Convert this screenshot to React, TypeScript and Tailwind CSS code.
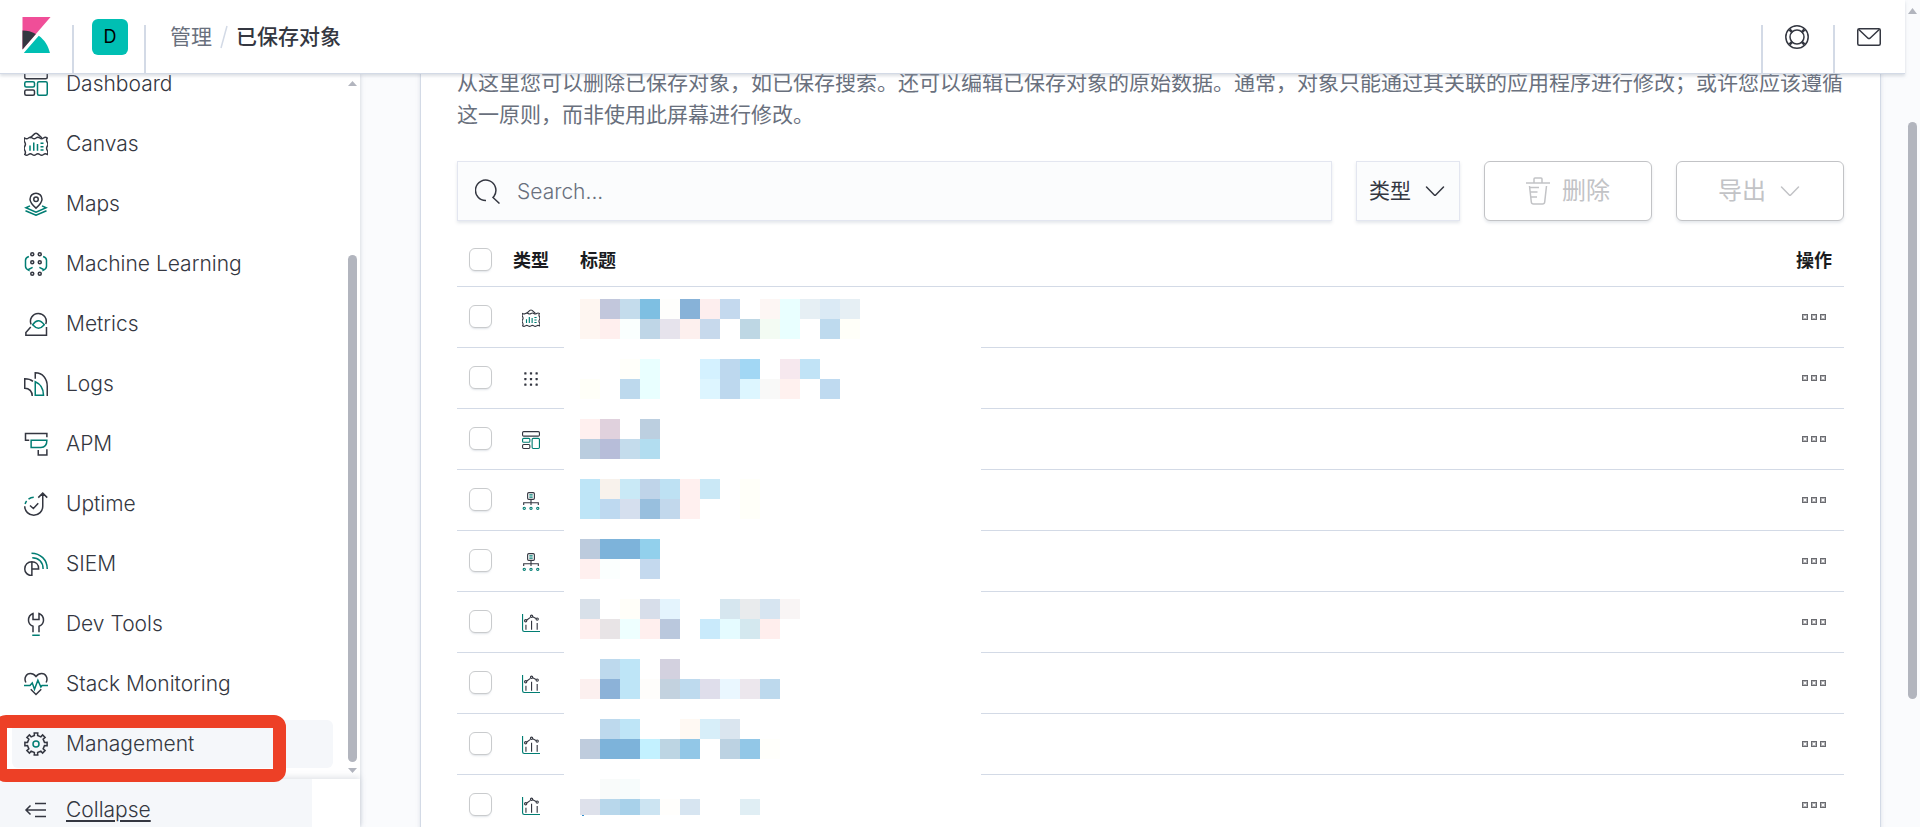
import React from 'react';

type IconProps = { className?: string };

const DARK = '#343741';
const TEAL = '#017d73';

function AppIcon({ className = 'size-6', children }: IconProps & { children: React.ReactNode }) {
  return (
    <svg viewBox="0 0 32 32" className={`shrink-0 ${className}`} fill="none" stroke={DARK} strokeWidth="2" aria-hidden="true">
      {children}
    </svg>
  );
}

function DashboardIcon({ className }: IconProps) {
  return (
    <AppIcon className={className}>
      <rect x="1" y="1" width="30" height="8" rx="2" />
      <rect x="1" y="13" width="13" height="7" rx="2" stroke={TEAL} />
      <rect x="18" y="13" width="13" height="18" rx="2" stroke={TEAL} />
      <rect x="1" y="24" width="13" height="7" rx="2" />
    </AppIcon>
  );
}

function CanvasIcon({ className }: IconProps) {
  return (
    <AppIcon className={className}>
      <path d="M8 8l6-5.500q2-1.500 4 0L24 8" />
      <path d="M1 8q2.500 1.800 5 0t5 0 5 0 5 0 5 0 5 0q-1.800 2.750 0 5.500t0 5.500 0 5.500 0 5.500q-2.500-1.800-5 0t-5 0-5 0-5 0-5 0-5 0q1.800-2.750 0-5.500t0-5.500 0-5.500 0-5.500z" />
      <path d="M8 18v7M13 14v11M18 16v9M22 15h4M22 19.500h4M22 24h4" stroke={TEAL} />
    </AppIcon>
  );
}

function MapsIcon({ className }: IconProps) {
  return (
    <AppIcon className={className}>
      <path d="M16 21.500C10 16 8 13 8 9.500a8 8 0 0 1 16 0c0 3.500-2 6.500-8 12z" />
      <circle cx="16" cy="9.500" r="3" />
      <path d="M8 18.500l-5.500 2.500L16 27l13.500-6L24 18.500M2 25l14 6 14-6" stroke={TEAL} />
    </AppIcon>
  );
}

function MachineLearningIcon({ className }: IconProps) {
  return (
    <AppIcon className={className}>
      {[3, 13.5, 29].map((cy) => (
        <g key={cy}>
          <circle cx="11" cy={cy} r="2" />
          <circle cx="21" cy={cy} r="2" />
        </g>
      ))}
      <path d="M6.500 6Q2 7.500 2 11v8q0 3.500 4.500 5.500v-1.500l5-2.500M25.500 6Q30 7.500 30 11v8q0 3.500-4.500 5.500v-1.500l-5-2.500" stroke={TEAL} />
    </AppIcon>
  );
}

function MetricsIcon({ className }: IconProps) {
  return (
    <AppIcon className={className}>
      <path d="M9.500 16.500A10.500 10.500 0 1 1 29 16M9 20l-6.500 7.500V31H30V20" />
      <path d="M11.500 17q7.500-10.500 15.500 0-7.500 9-15.500 0z" stroke={TEAL} />
    </AppIcon>
  );
}

function LogsIcon({ className }: IconProps) {
  return (
    <AppIcon className={className}>
      <path d="M15 9V1c10 0 16 8 16 18v13M12 12.500C9 10 6 9 1 9v12.500c6 0 10 4.500 10 10.500" />
      <path d="M15 31V13c7 3 11 9 11 18z" stroke={TEAL} />
    </AppIcon>
  );
}

function ApmIcon({ className }: IconProps) {
  return (
    <AppIcon className={className}>
      <path d="M7 11H2V2h28.500v5M19 24v6.500h11.500V23" />
      <path d="M9.500 11h21c0 6-3 9.500-8 9.500h-13z" stroke={TEAL} />
    </AppIcon>
  );
}

function UptimeIcon({ className }: IconProps) {
  return (
    <AppIcon className={className}>
      <path d="M1 19a12 12 0 0 0 24 0V2M19 7.500L25 1.500l6 6M8 18l4.500 4 6.500-7" />
      <path d="M1.500 16A12 12 0 0 1 3.500 12M6 9.500A12 12 0 0 1 13 7" stroke={TEAL} />
    </AppIcon>
  );
}

function SiemIcon({ className }: IconProps) {
  return (
    <AppIcon className={className}>
      <path d="M10.500 13v18.500C5 31.500 1 27.500 1 22.500 1 17 5 13 10.500 13c5 0 9 3.500 9 9.500h-9" />
      <path d="M10 1.500c12 0 21 9 21 21M11 7.500c8.500 0 14.500 6 14.500 15" stroke={TEAL} />
    </AppIcon>
  );
}

function DevToolsIcon({ className }: IconProps) {
  return (
    <AppIcon className={className}>
      <path d="M12 27v-8C8 17.500 6 14.500 6 11c0-4.500 2-7.500 6-9v8h8V2c4 1.500 6 4.500 6 9 0 3.500-2 6.500-6 8v8" />
      <path d="M11 31h10" stroke={TEAL} />
    </AppIcon>
  );
}

function MonitoringIcon({ className }: IconProps) {
  return (
    <AppIcon className={className}>
      <path d="M2.500 14C-.5 8 3 2 8.500 2c3 0 5.500 1.500 7.500 4 2-2.500 4.500-4 7.500-4C29 2 32.500 8 29.500 14M9 23l7 7 7-7" />
      <path d="M0 18h8l3-3.500L14 23l4.500-12 4 9 1.500-2h8" stroke={TEAL} />
    </AppIcon>
  );
}

function gearPath(teeth: number, outer: number, inner: number) {
  const points: string[] = [];
  const step = (Math.PI * 2) / teeth;
  for (let i = 0; i < teeth; i++) {
    const mid = i * step - Math.PI / 2;
    const corners: [number, number][] = [
      [-0.24, inner],
      [-0.2, outer],
      [0.2, outer],
      [0.24, inner],
    ];
    corners.forEach(([part, radius]) => {
      const angle = mid + part * step;
      points.push(`${(16 + radius * Math.cos(angle)).toFixed(2)} ${(16 + radius * Math.sin(angle)).toFixed(2)}`);
    });
  }
  return `M${points.join('L')}Z`;
}

function ManagementIcon({ className }: IconProps) {
  return (
    <AppIcon className={className}>
      <path d={gearPath(8, 15, 11.5)} />
      <circle cx="16" cy="16" r="4" stroke={TEAL} />
    </AppIcon>
  );
}

function VisualizeIcon({ className }: IconProps) {
  return (
    <AppIcon className={className}>
      <path d="M1 0v28q0 3 3 3h28" stroke={TEAL} />
      <path d="M7 19v9M17 12v16M27 16v12M8 11l7-5M19 5l6 3" />
      <circle cx="6.500" cy="12" r="2" />
      <circle cx="17" cy="4" r="2" />
      <circle cx="27" cy="9" r="2" />
    </AppIcon>
  );
}

function IndexPatternIcon({ className }: IconProps) {
  return (
    <AppIcon className={className}>
      <rect x="10" y="1" width="12" height="12" rx="2" />
      <path d="M13 5h6M13 9h6" stroke={TEAL} />
      <path d="M16 13v10M3 23v-4h26v4" />
      <circle cx="4" cy="29" r="2" stroke={TEAL} />
      <circle cx="16" cy="29" r="2" stroke={TEAL} />
      <circle cx="28" cy="29" r="2" stroke={TEAL} />
    </AppIcon>
  );
}

function GridIcon({ className }: IconProps) {
  return (
    <AppIcon className={className}>
      <g fill={DARK} stroke="none">
        {[4, 14, 24].map((y) => [4, 14, 24].map((x) => <rect key={`${x}-${y}`} x={x} y={y} width="4" height="4" rx="1" />))}
      </g>
    </AppIcon>
  );
}

function ChevronIcon({ className }: IconProps) {
  return (
    <svg viewBox="0 0 24 24" className={`size-6 shrink-0 ${className ?? ''}`} fill="none" stroke="currentColor" strokeWidth="1.500" strokeLinecap="round" aria-hidden="true">
      <path d="M3.500 8l7.800 8q.7.700 1.400 0l7.800-8" />
    </svg>
  );
}

const navItems = [
  { label: 'Dashboard', Icon: DashboardIcon },
  { label: 'Canvas', Icon: CanvasIcon },
  { label: 'Maps', Icon: MapsIcon },
  { label: 'Machine Learning', Icon: MachineLearningIcon },
  { label: 'Metrics', Icon: MetricsIcon },
  { label: 'Logs', Icon: LogsIcon },
  { label: 'APM', Icon: ApmIcon },
  { label: 'Uptime', Icon: UptimeIcon },
  { label: 'SIEM', Icon: SiemIcon },
  { label: 'Dev Tools', Icon: DevToolsIcon },
  { label: 'Stack Monitoring', Icon: MonitoringIcon },
  { label: 'Management', Icon: ManagementIcon, active: true },
];

const rows = [
  { type: 'canvas', Icon: CanvasIcon },
  { type: 'grid', Icon: GridIcon },
  { type: 'dashboard', Icon: DashboardIcon },
  { type: 'index-pattern', Icon: IndexPatternIcon },
  { type: 'index-pattern', Icon: IndexPatternIcon },
  { type: 'visualization', Icon: VisualizeIcon },
  { type: 'visualization', Icon: VisualizeIcon },
  { type: 'visualization', Icon: VisualizeIcon },
  { type: 'visualization', Icon: VisualizeIcon },
];

// Two lines of 20px blocks for each redacted title; "-" leaves a block empty.
const mosaic = [
  [
    'fef6f1 c2c7dc c4dcec 7ebfe2 fefefc 87b2d8 fdeeee c4d9ee - fdf6f4 e9ffff e6eff4 dbeaf5 e6eff4',
    'fef6f1 ffefee fafffe bfd6e7 e6e3ec fdf0ee c7d9ec - bed7e4 f3fbf3 e9ffff - bedaee fffff9',
  ],
  [
    '- - fffffa e9ffff - - d4f1ff bdd8ee a2d7f4 - f6e8ee c1e3f6',
    'fffff8 - bdd9ed e9ffff - - ddf5ff bdd8ee ddf6ff f9f9f8 fff1ef - bfdaf0',
  ],
  ['fff0ef e0d1dd - bccfe0', 'bacddf b7bdd9 c4dcec b2ddf0'],
  [
    'bee5f7 f8f2ec c9e9f6 bfd4e9 bee1f3 fff0ef cae8f6 - fffff9',
    'bee5f7 bed9f0 d5dfee 98bfde c2d8ec fff0ef - - fffff9',
  ],
  ['bccbdd 7db3da 7db3da 92d0ec', 'fff0ef fbfffe - c4d9ee'],
  [
    'd8e0e9 - fffef9 d7deea e4f4fd - - d6e6ef e9ebed d7e5f1 f9f5f5',
    'fff0ef e8e4e6 eeffff ffefee bac8dd - c9eafb e5fbff d4e8ef ffeeed',
  ],
  [
    '- bdd9ed bee5f7 - d3d1df',
    'fcf0ef 8cb2d8 bee5f7 fefdfb c3d2df bedaee dfdeeb eaf7ff ece7ed bdd9ed',
  ],
  [
    '- bdd9ed bee5f7 - - fff9f3 d7eef9 dae5ef',
    'bfccdd 7db3da 7db3da c3f1ff bdd5e3 92c7e7 - bcd2e2 92c7e7 fffffb',
  ],
  ['- f9fbfa f7fcfc', 'dee1eb b8d7eb a8d1ea cce4f2 fffefc d7e5f1 - - e0eef4'],
];

function TitleMosaic() {
  return (
    <svg width="280" height="517" viewBox="0 0 280 517" shapeRendering="crispEdges" className="pointer-events-none absolute top-[66px] left-[123px]" aria-hidden="true">
      {mosaic.map((lines, block) =>
        lines.map((line, half) =>
          line.split(' ').map((color, col) =>
            color === '-' ? null : (
              <rect
                key={`${block}-${half}-${col}`}
                x={col * 20}
                y={block * 60 + half * 20}
                width="20"
                height={block === mosaic.length - 1 && half === 1 ? 16 : 20}
                fill={`#${color}`}
              />
            ),
          ),
        ),
      )}
      <rect x="2" y="516" width="2" height="1" fill="#2f8fd0" />
    </svg>
  );
}

function Checkbox({ label }: { label: string }) {
  return (
    <input
      type="checkbox"
      aria-label={label}
      className="ml-3 block size-[23px] appearance-none rounded-md border border-[#c9cbcd] bg-white shadow-[0_2px_2px_-1px_rgba(152,162,179,0.3)] checked:bg-[#006bb4]"
    />
  );
}

function Header() {
  return (
    <header className="z-10 flex h-[74px] shrink-0 items-start border-b border-[#d3dae6] bg-white shadow-[0_2px_3px_rgba(152,162,179,0.35)]">
      <a href="#home" aria-label="Kibana" className="flex h-[70px] w-[72px] items-center justify-center">
        <svg viewBox="0 0 32 32" className="size-9" aria-hidden="true">
          <path fill="#f04e98" d="M4 0v28.789L28.935.017z" />
          <path fill="#343741" d="M4 12v16.789l11.906-13.738A24.721 24.721 0 0 0 4 12" />
          <path fill="#00bfb3" d="M18.479 16.664L6.268 30.754l-1.073 1.237h23.191c-1.252-6.292-4.883-11.719-9.908-15.327" />
        </svg>
      </a>
      <span className="h-12 w-0.5 self-end bg-[#d3dae6]" />
      <button type="button" className="flex h-[73px] w-[70px] items-center justify-end pr-4">
        <span className="flex size-9 items-center justify-center rounded-md bg-[#00bfb3] text-lg text-black">D</span>
      </button>
      <span className="h-12 w-0.5 self-end bg-[#d3dae6]" />
      <nav aria-label="Breadcrumb" className="flex h-[73px] items-center pl-6 text-[21px]">
        <a href="#management" className="text-[#69707d]">管理</a>
        <svg viewBox="0 0 8 24" className="mx-2 h-6 w-2" aria-hidden="true">
          <path d="M7 1L1 23" stroke="#d3dae6" strokeWidth="1.500" />
        </svg>
        <span aria-current="page" className="font-medium text-[#343741]">已保存对象</span>
      </nav>
      <div className="ml-auto flex h-[73px] items-center">
        <span className="h-12 w-0.5 self-end bg-[#d3dae6]" />
        <button type="button" aria-label="Help" className="flex h-full w-[70px] items-center justify-center pr-0.5">
          <svg viewBox="0 0 24 24" className="size-6" fill="none" stroke={DARK} strokeWidth="1.500" aria-hidden="true">
            <circle cx="12" cy="12" r="11.200" />
            <circle cx="12" cy="12" r="7" />
            <path strokeWidth="2.500" d="M4.500 4.500l3 3M19.500 4.500l-3 3M4.500 19.500l3-3M19.500 19.500l-3-3" />
          </svg>
        </button>
        <span className="h-12 w-0.5 self-end bg-[#d3dae6]" />
        <button type="button" aria-label="Newsfeed" className="flex h-full w-[70px] items-center justify-center pr-0.5">
          <svg viewBox="0 0 24 24" className="size-6" fill="none" stroke={DARK} strokeWidth="1.500" aria-hidden="true">
            <rect x="0.750" y="3.750" width="22.500" height="16.500" rx="1.500" />
            <path d="M1.500 4.200l9.500 9q1 .8 2 0l9.500-9" />
          </svg>
        </button>
      </div>
    </header>
  );
}

function SideNav() {
  return (
    <aside className="relative z-[5] flex w-[360px] shrink-0 flex-col bg-white shadow-[0_0_4px_rgba(152,162,179,0.5)]">
      <div className="flex min-h-0 flex-1">
        <nav aria-label="Main" className="min-w-0 flex-1 overflow-hidden px-3">
          <ul className="-mt-[14px] flex flex-col gap-3">
            {navItems.map(({ label, Icon, active }) => (
              <li key={label}>
                <a href={`#${label}`} className={`flex h-12 items-center gap-[18px] rounded-md px-3 text-[21px] font-[350] text-[#343741] ${active ? 'bg-[#f5f7fa]' : ''}`}>
                  <Icon />
                  {label}
                </a>
              </li>
            ))}
          </ul>
        </nav>
        <div className="flex w-[15px] flex-col items-center" aria-hidden="true">
          <svg viewBox="0 0 9 5" className="mt-[7px] h-[5px] w-[9px]"><path d="M0 5L4.500 0 9 5z" fill="#b2b5be" /></svg>
          <div className="mt-[169px] mb-1.5 w-[9px] flex-1 rounded-full bg-[#b2b5be]" />
          <svg viewBox="0 0 9 5" className="mb-[6px] h-[5px] w-[9px]"><path d="M0 0L4.500 5 9 0z" fill="#b2b5be" /></svg>
        </div>
      </div>
      <div className="h-12 shrink-0 overflow-visible bg-white shadow-[0_-2px_6px_rgba(152,162,179,0.3)]">
        <button type="button" className="flex h-[62px] w-[312px] items-center gap-[18px] bg-[#f5f7fa] px-6 text-[21px] font-[350] text-[#343741] underline decoration-2 underline-offset-3">
          <svg viewBox="0 0 24 24" className="size-6 shrink-0" fill="none" stroke={DARK} strokeWidth="1.500" aria-hidden="true">
            <path d="M11 5.500h11M2 12h20M11 18.500h11M6.500 7.500L2 12l4.500 4.500" />
          </svg>
          Collapse
        </button>
      </div>
      <div className="pointer-events-none absolute bottom-[45px] -left-[6px] h-[67px] w-[292px] rounded-xl border-[13px] border-[#ed4026]" aria-hidden="true" />
    </aside>
  );
}

function Toolbar() {
  return (
    <div className="mt-[30px] flex h-[60px] gap-6">
      <label className="flex min-w-0 flex-1 items-center gap-[17px] border border-[#e3e6f0] bg-[#fbfcfd] pl-[17px] shadow-[0_2px_3px_rgba(152,162,179,0.25)]">
        <svg viewBox="0 0 25 25" className="size-[25px] shrink-0" fill="none" stroke={DARK} strokeWidth="1.500" aria-hidden="true">
          <path d="M11 21.500A10.200 10.200 0 1 1 19 17.200L18 18.500 24.500 24.500" />
        </svg>
        <input type="search" aria-label="Search" placeholder="Search..." className="min-w-0 flex-1 bg-transparent pt-0.5 text-[21px] font-[350] text-[#343741] outline-none placeholder:text-[#69707d]" />
      </label>
      <button type="button" className="flex w-[104px] items-center justify-center gap-3 border border-[#e3e6f0] bg-[#fbfcfd] text-[21px] text-[#343741] shadow-[0_2px_3px_rgba(152,162,179,0.25)]">
        类型
        <ChevronIcon />
      </button>
      <button type="button" disabled className="flex w-[168px] items-center justify-center gap-3 rounded-md border border-[#c2c3c6] bg-white text-2xl text-[#c2c3c6] shadow-[0_2px_3px_rgba(152,162,179,0.25)]">
        <svg viewBox="0 0 24 28" className="h-7 w-6 shrink-0" fill="none" stroke="currentColor" strokeWidth="1.500" aria-hidden="true">
          <path d="M0 6h24M8 6V2q0-1 1-1h6q1 0 1 1v4M3.500 9l1.800 16q.2 2 2.200 2h9q2 0 2.200-2L20.500 9M4 10.500h9M4.500 15h7M5 20h6" />
        </svg>
        删除
      </button>
      <button type="button" disabled className="flex w-[168px] items-center justify-center gap-3 rounded-md border border-[#c2c3c6] bg-white text-2xl text-[#c2c3c6] shadow-[0_2px_3px_rgba(152,162,179,0.25)]">
        导出
        <ChevronIcon />
      </button>
    </div>
  );
}

function ObjectTable() {
  return (
    <div className="relative mt-3">
      <table className="w-full table-fixed border-separate border-spacing-0 text-left text-lg text-[#1a1c21]">
        <colgroup>
          <col className="w-12" />
          <col className="w-[59px]" />
          <col className="w-[417px]" />
          <col />
          <col className="w-[60px]" />
        </colgroup>
        <thead>
          <tr className="h-[54px]">
            <th className="border-b border-[#d3dae6] p-0"><Checkbox label="Select all" /></th>
            <th className="border-b border-[#d3dae6] p-0 pt-0.5 pl-2 font-bold">类型</th>
            <th colSpan={2} className="border-b border-[#d3dae6] p-0 pt-0.5 pl-4 font-bold">标题</th>
            <th className="border-b border-[#d3dae6] p-0 pt-0.5 text-center font-bold">操作</th>
          </tr>
        </thead>
        <tbody>
          {rows.map(({ type, Icon }, index) => (
            <tr key={index} className="h-[61px]">
              <td className="border-b border-[#d3dae6] p-0 pb-0.5"><Checkbox label={`Select row ${index + 1}`} /></td>
              <td className="border-b border-[#d3dae6] p-0 pt-0.5" title={type}>
                <span className="ml-2 flex w-9 justify-center"><Icon className="size-[18px]" /></span>
              </td>
              <td className="p-0" />
              <td className="border-b border-[#d3dae6] p-0" />
              <td className="border-b border-[#d3dae6] p-0">
                <button type="button" aria-label="Actions" className="flex h-9 w-full items-center justify-center gap-[3px]">
                  <span className="size-1.5 border border-[#6a6b70] bg-white inset-ring inset-ring-[#b5b5b8]" />
                  <span className="size-1.5 border border-[#6a6b70] bg-white inset-ring inset-ring-[#b5b5b8]" />
                  <span className="size-1.5 border border-[#6a6b70] bg-white inset-ring inset-ring-[#b5b5b8]" />
                </button>
              </td>
            </tr>
          ))}
        </tbody>
      </table>
      <TitleMosaic />
    </div>
  );
}

export default function App() {
  return (
    <div className="flex h-screen overflow-hidden bg-[#fafbfd] font-['Inter','Noto_Sans_CJK_SC',sans-serif]">
      <div className="flex min-w-0 flex-1 flex-col">
        <Header />
        <div className="flex min-h-0 flex-1">
          <SideNav />
          <main className="min-w-0 flex-1 overflow-hidden pr-6 pl-[60px]">
            <section className="-mt-11 border border-[#d3dae6] bg-white p-9 shadow-[0_2px_4px_rgba(152,162,179,0.3)]">
              <p className="text-[21px] leading-8 text-[#69707d]">
                从这里您可以删除已保存对象，如已保存搜索。还可以编辑已保存对象的原始数据。通常，对象只能通过其关联的应用程序进行修改；或许您应该遵循这一原则，而非使用此屏幕进行修改。
              </p>
              <Toolbar />
              <ObjectTable />
            </section>
          </main>
        </div>
      </div>
      <div className="flex w-[15px] shrink-0 flex-col items-center" aria-hidden="true">
        <svg viewBox="0 0 9 6" className="mt-2 h-1.5 w-[9px]"><path d="M0 6L4.500 0 9 6z" fill="#b2b5be" /></svg>
        <div className="mt-[108px] mb-32 w-[9px] flex-1 rounded-full bg-[#b2b5be]" />
      </div>
    </div>
  );
}
